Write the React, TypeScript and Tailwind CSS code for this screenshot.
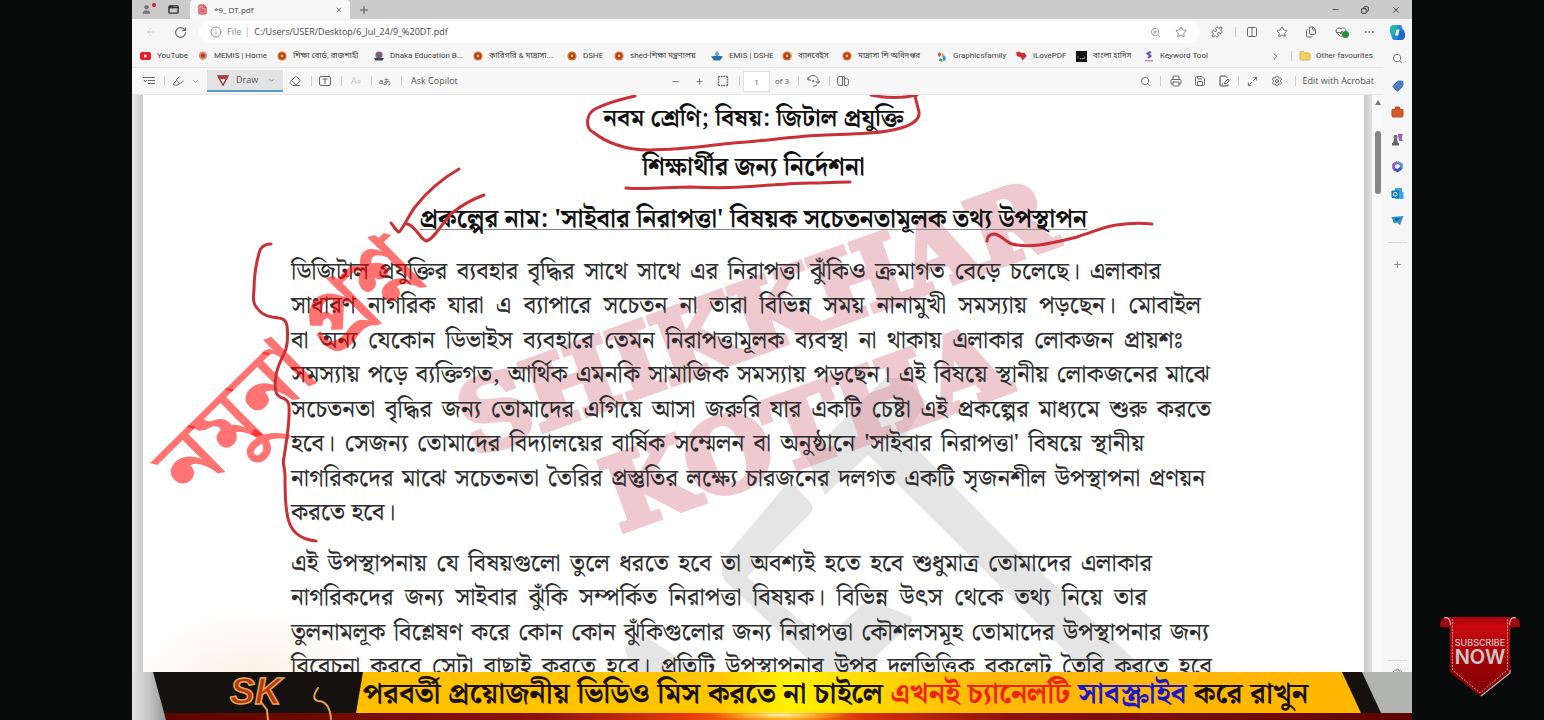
import React from "react";
import {
  ArrowLeft, RotateCw, Info, ZoomIn, Star, Puzzle, Columns2, HeartPulse, Ellipsis,
  Search, Tag, BriefcaseBusiness, Plus, Minus, X, Copy, ChevronRight, ChevronDown, Folder,
  Eraser, Printer, Save, FilePenLine, Maximize2, Settings, Highlighter,
  SquareDashed, Files, AppWindow, User, FileText,
} from "lucide-react";

const ui = "font-['Open_Sans','Noto_Sans_Bengali',sans-serif]";
const bn = "font-['Noto_Serif_Bengali','Noto_Sans_Bengali',serif]";

const Sep = ({ w }: { w: string }) => (
  <span className={`flex shrink-0 justify-center ${w}`}>
    <span className="h-[10px] w-px bg-[#d0d0d0]" />
  </span>
);

const Btn = ({ label, w, children }: { label: string; w: string; children: React.ReactNode }) => (
  <button type="button" aria-label={label} className={`flex h-full shrink-0 items-center justify-center ${w}`}>
    {children}
  </button>
);

const Seal = () => (
  <svg width="10" height="10" viewBox="0 0 10 10">
    <circle cx="5" cy="5" r="4.6" fill="#d9722f" />
    <circle cx="5" cy="5" r="3" fill="#a8341c" />
    <circle cx="5" cy="5" r="1.4" fill="#f6c65a" />
  </svg>
);

const YouTube = () => (
  <svg width="11" height="10" viewBox="0 0 11 10">
    <rect y="1" width="11" height="8" rx="2" fill="#e0202a" />
    <path d="M4.3 3.2 7.4 5 4.3 6.8Z" fill="#fff" />
  </svg>
);

const Crest = () => (
  <svg width="10" height="10" viewBox="0 0 10 10">
    <circle cx="5" cy="4" r="3.6" fill="#5a6f96" />
    <circle cx="5" cy="4" r="1.8" fill="#d33b3b" />
    <path d="M0 7h10L8.500 9.500h-7Z" fill="#33456b" />
  </svg>
);

const Home = () => (
  <svg width="10" height="10" viewBox="0 0 10 10">
    <circle cx="5" cy="4.600" r="4.200" fill="#e58a74" />
    <circle cx="5" cy="4.600" r="2.200" fill="#b13f2c" />
  </svg>
);

const Emis = () => (
  <svg width="12" height="10" viewBox="0 0 12 10">
    <path d="M6 0 8.500 3 6 5 3.500 3Z" fill="#58a6dc" />
    <path d="M0 5.500 6 4.500l6 1L9 9.500H3Z" fill="#2b6cb0" />
  </svg>
);

const Graphics = () => (
  <svg width="10" height="11" viewBox="0 0 10 11">
    <path d="M2 1 4.500 3 2.500 6 0.800 4Z" fill="#d84040" />
    <path d="M5 3.500 8 5 9 8.500 6.500 10.500Z" fill="#3f8fd6" />
    <path d="M2.500 7 6 8.500 5 10.800 2 10Z" fill="#48a858" />
    <path d="M4.500 1.500 7 3 5.500 5Z" fill="#e8b23c" />
  </svg>
);

const Love = () => (
  <svg width="11" height="10" viewBox="0 0 11 10">
    <path d="M0 1.500 3 .5 5.500 2 8.500 1.800 10.800 5 6.500 9.500 5 6.500 1 5Z" fill="#d32f2f" />
  </svg>
);

const Hadith = () => (
  <svg width="11" height="11" viewBox="0 0 11 11">
    <rect width="11" height="11" fill="#111" />
    <path d="M2 7.500V5M4 7.500h5M8.500 7V5.500" stroke="#999" strokeWidth=".8" fill="none" />
  </svg>
);

const Keyword = () => (
  <svg width="10" height="11" viewBox="0 0 10 11" fill="none">
    <path d="M7 1 3.500 2.500 6.500 5 4 7" stroke="#6b4bb8" strokeWidth="2" />
    <path d="M1 9.700h8" stroke="#d890cc" strokeWidth="1.600" />
  </svg>
);

const bookmarks: { t: string; w: string; i: React.ReactNode }[] = [
  { t: "YouTube", w: "w-[58px]", i: <YouTube /> },
  { t: "MEMIS | Home", w: "w-[79px]", i: <Home /> },
  { t: "শিক্ষা বোর্ড, রাজশাহী", w: "w-[97px]", i: <Seal /> },
  { t: "Dhaka Education B...", w: "w-[99px]", i: <Crest /> },
  { t: "কারিগরি & মাদ্রাসা...", w: "w-[94px]", i: <Seal /> },
  { t: "DSHE", w: "w-[47px]", i: <Seal /> },
  { t: "shed-শিক্ষা মন্ত্রণালয়", w: "w-[97px]", i: <Seal /> },
  { t: "EMIS | DSHE", w: "w-[71px]", i: <Emis /> },
  { t: "ব্যানবেইস", w: "w-[60px]", i: <Seal /> },
  { t: "মাদ্রাসা শি অধিদপ্তর", w: "w-[95px]", i: <Seal /> },
  { t: "Graphicsfamily", w: "w-[79px]", i: <Graphics /> },
  { t: "iLovePDF", w: "w-[60px]", i: <Love /> },
  { t: "বাংলা হাদিস", w: "w-[68px]", i: <Hadith /> },
  { t: "Keyword Tool", w: "w-[80px]", i: <Keyword /> },
];

const first: [string, string][] = [
  ["w-[870px]", "ডিজিটাল প্রযুক্তির ব্যবহার বৃদ্ধির সাথে সাথে এর নিরাপত্তা ঝুঁকিও ক্রমাগত বেড়ে চলেছে। এলাকার"],
  ["w-[910px]", "সাধারণ নাগরিক যারা এ ব্যাপারে সচেতন না তারা বিভিন্ন সময় নানামুখী সমস্যায় পড়ছেন। মোবাইল"],
  ["w-[892px]", "বা অন্য যেকোন ডিভাইস ব্যবহারে তেমন নিরাপত্তামূলক ব্যবস্থা না থাকায় এলাকার লোকজন প্রায়শঃ"],
  ["w-[919px]", "সমস্যায় পড়ে ব্যক্তিগত, আর্থিক এমনকি সামাজিক সমস্যায় পড়ছেন। এই বিষয়ে স্থানীয় লোকজনের মাঝে"],
  ["w-[920px]", "সচেতনতা বৃদ্ধির জন্য তোমাদের এগিয়ে আসা জরুরি যার একটি চেষ্টা এই প্রকল্পের মাধ্যমে শুরু করতে"],
  ["w-[853px]", "হবে। সেজন্য তোমাদের বিদ্যালয়ের বার্ষিক সম্মেলন বা অনুষ্ঠানে 'সাইবার নিরাপত্তা' বিষয়ে স্থানীয়"],
  ["w-[914px]", "নাগরিকদের মাঝে সচেতনতা তৈরির প্রস্তুতির লক্ষ্যে চারজনের দলগত একটি সৃজনশীল উপস্থাপনা প্রণয়ন"],
  ["w-[102px]", "করতে হবে।"],
];

const second: [string, string][] = [
  ["w-[861px]", "এই উপস্থাপনায় যে বিষয়গুলো তুলে ধরতে হবে তা অবশ্যই হতে হবে শুধুমাত্র তোমাদের এলাকার"],
  ["w-[856px]", "নাগরিকদের জন্য সাইবার ঝুঁকি সম্পর্কিত নিরাপত্তা বিষয়ক। বিভিন্ন উৎস থেকে তথ্য নিয়ে তার"],
  ["w-[918px]", "তুলনামলূক বিশ্লেষণ করে কোন কোন ঝুঁকিগুলোর জন্য নিরাপত্তা কৌশলসমূহ তোমাদের উপস্থাপনার জন্য"],
  ["w-[921px]", "বিবেচনা করবে সেটা বাছাই করতে হবে। প্রতিটি উপস্থাপনার উপর দলভিত্তিক বুকলেট তৈরি করতে হবে"],
];

const Para = ({ lines, h }: { lines: [string, string][]; h: string }) => (
  <p className={`flex flex-col justify-between text-[24px] font-medium leading-[34px] text-[#2e2e2e] ${h}`}>
    {lines.map(([w, t]) => (
      <span key={t} className={`block h-[34px] whitespace-nowrap text-justify [text-align-last:justify] ${w}`}>{t}</span>
    ))}
  </p>
);

const Watermark = () => (
  <svg className="absolute left-0 top-0 h-[577px] w-[1251px]" viewBox="132 95 1251 577" aria-hidden="true">
    <defs>
      <radialGradient id="warm">
        <stop offset="0" stopColor="#f6d2ac" stopOpacity=".35" />
        <stop offset="1" stopColor="#f6d2ac" stopOpacity="0" />
      </radialGradient>
    </defs>
    <ellipse cx="255" cy="680" rx="120" ry="70" fill="url(#warm)" />
    <g fill="#e5e5e5">
      <path d="M806 457 825 495 868 455 964 550 1088 674H1150L1017 550 905 437 926 402 905 378H885Z" />
      <path d="M784 487Q790 483 796 487L811 503Q815 508 810 514L747 577 825 640 864 603Q870 598 877 603L910 616Q915 620 909 626L850 680H830L724 580Q719 570 725 557Z" />
      <path d="M625 649Q634 634 646 637L704 674H632Z" />
    </g>
    <g fill="#dc8a9b" opacity=".46" stroke="#dc8a9b" strokeWidth="6" strokeLinejoin="miter" fontWeight="bold" fontFamily="'DejaVu Serif', serif">
      <text transform="translate(474 456) rotate(-19.900)" fontSize="97">SHIKKHAR</text>
      <text transform="translate(620 532) rotate(-19.900)" fontSize="100">KOTHA</text>
    </g>
  </svg>
);

const Ink = () => (
  <svg className="pointer-events-none absolute left-0 top-0 h-[577px] w-[1251px]" viewBox="132 95 1251 577" aria-hidden="true">
    <text transform="translate(192 501) rotate(-44.500)" fontSize="91" fontWeight="700" fill="#ff0000" fillOpacity=".55" fontFamily="'Noto Serif Bengali', serif">নমুনা প্রশ্ন</text>
    <g fill="none" stroke="#c93038" strokeWidth="3" strokeLinecap="round" strokeLinejoin="round">
      <path d="M635 96C617 100 605 104 595 109C586 114 585 128 593 132C605 142 625 150 649 150C680 150 705 146 733 143C765 141 795 136 825 135C858 134 885 133 901 128C914 124 920 119 919 112L915 96" />
      <path d="M871 95Q894 100 917 95" />
      <path d="M626 188C645 190 670 187 691 187C710 188 728 188 741 187C765 186 790 183 810 183C825 183 838 182 850 182" />
      <path d="M987 241C987 236 990 234 995 234C1002 236 1006 242 1012 244C1020 246 1031 246 1039 245C1054 243 1064 240 1077 237C1093 232 1106 226 1116 225C1130 223 1142 223 1152 224" />
      <path d="M391 223C394 226 396 231 399 232C402 230 409 215 415 207C430 188 445 177 459 169" />
      <path d="M407 224C415 225 420 239 426 241C434 240 445 219 452 213C462 205 473 199 484 195" />
      <path d="M271 244C266 244 262 246 260 250C256 263 254 280 254 290C253 299 253 304 257 308C261 314 266 316 272 317C280 318 286 318 287 326C288 334 288 341 286 349C282 359 277 366 276 376C274 388 276 395 280 397C286 399 289 401 289 407C290 420 286 445 284 457C282 464 285 468 285 475C285 490 285 503 287 513C289 531 299 539 316 541" />
    </g>
  </svg>
);

const Copilot = () => (
  <svg width="17" height="17" viewBox="0 0 17 17">
    <path d="M5 1h6c2 0 2 2 2.500 4L16 10c.5 3-1 6-4 6H6c-2.500 0-3-2-3.500-4L1 7C.5 4 2 1 5 1Z" fill="#1c88d8" />
    <path d="M5 1h5C7 3 7 8 5 11H2L1 7C.5 4 2 1 5 1Z" fill="#27b6a8" />
    <path d="M11 7l4-1 1 4c.5 3-1 6-4 6H7c3-2 3-6 4-9Z" fill="#2461c9" />
    <path d="M7.500 5.500h3L9 11.500H6Z" fill="#eaf7ff" />
  </svg>
);

const SideBtn = ({ label, children }: { label: string; children: React.ReactNode }) => (
  <button type="button" aria-label={label} className="flex h-[27px] items-center justify-center">{children}</button>
);

const Sidebar = () => (
  <aside className="flex w-[29px] shrink-0 flex-col bg-[#f6f6f6]">
    <SideBtn label="Search"><Search size={11} color="#6d6480" /></SideBtn>
    <SideBtn label="Shopping"><Tag size={12} className="scale-x-[-1]" fill="#4f7cc9" color="#4f7cc9" /></SideBtn>
    <SideBtn label="Tools"><BriefcaseBusiness size={13} fill="#cf5a2a" color="#b84a20" /></SideBtn>
    <SideBtn label="Games">
      <svg width="13" height="13" viewBox="0 0 13 13">
        <path d="M7 1h5l-1 2v3l1 2H8Z" fill="#9062c8" />
        <circle cx="4.500" cy="4" r="2.200" fill="#777" />
        <path d="M3 6h3l1 4h1v2.500H1V10h1Z" fill="#666" />
      </svg>
    </SideBtn>
    <SideBtn label="Microsoft 365">
      <svg width="13" height="13" viewBox="0 0 13 13" fill="none" strokeWidth="3">
        <path d="M6.500 2.200 10.300 4.500V8.700" stroke="#5b8ee0" />
        <path d="M10.300 8 6.500 10.800 2.700 8.700" stroke="#3e55c4" />
        <path d="M2.700 9V4.500L6.500 2.200" stroke="#8a62cf" />
      </svg>
    </SideBtn>
    <SideBtn label="Outlook">
      <svg width="13" height="13" viewBox="0 0 13 13">
        <path d="M4 1h7v4h1.500v7H4Z" fill="#38a5e0" />
        <rect x=".5" y="3.500" width="7.500" height="7.500" rx="1" fill="#1672b8" />
        <circle cx="4.200" cy="7.200" r="1.900" fill="none" stroke="#fff" />
      </svg>
    </SideBtn>
    <SideBtn label="Drop">
      <svg width="13" height="11" viewBox="0 0 13 11">
        <path d="M.5 2 12.500 1 9 10 6 7.500 3 8.500Z" fill="#2a93cf" />
        <path d="M3 3.500 9 3 5.500 6.500Z" fill="#17608f" />
      </svg>
    </SideBtn>
    <span className="mx-[5px] mt-2 h-px bg-[#d8d8d8]" />
    <button type="button" aria-label="Add" className="flex h-[43px] items-center justify-center"><Plus size={11} color="#8b8b8b" /></button>
    <span className="mx-[5px] mt-auto h-px bg-[#d8d8d8]" />
    <button type="button" aria-label="Settings" className="flex h-[11px] shrink-0 justify-center overflow-hidden pt-[7px]"><Settings size={11} className="shrink-0" color="#777" /></button>
  </aside>
);

const Banner = () => (
  <footer className="relative flex h-12 shrink-0 overflow-hidden bg-[#15110e]">
    <svg className="absolute inset-0 h-full w-full" viewBox="0 0 1280 48" preserveAspectRatio="none" aria-hidden="true">
      <defs>
        <linearGradient id="gold"><stop offset="0" stopColor="#ffbf00" /><stop offset=".36" stopColor="#ffc600" /><stop offset=".43" stopColor="#fff200" /><stop offset=".5" stopColor="#ffdc00" /><stop offset=".62" stopColor="#ffb80a" /><stop offset="1" stopColor="#ffb700" /></linearGradient>
        <linearGradient id="blaze"><stop offset="0" stopColor="#5c0500" /><stop offset=".3" stopColor="#8a1200" /><stop offset=".42" stopColor="#e63a08" /><stop offset=".5" stopColor="#ff9a1c" /><stop offset=".56" stopColor="#d92f05" /><stop offset=".68" stopColor="#8a1200" /><stop offset="1" stopColor="#5c0500" /></linearGradient>
        <linearGradient id="steel"><stop offset="0" stopColor="#e2e2e2" /><stop offset=".5" stopColor="#c4c5c4" /><stop offset="1" stopColor="#959795" /></linearGradient>
        <radialGradient id="spark"><stop offset="0" stopColor="#fff6b0" /><stop offset="1" stopColor="#ffd000" stopOpacity="0" /></radialGradient>
      </defs>
      <path d="M0 0H21L34 48H0Z" fill="url(#steel)" />
      <path d="M231 0H1210L1229 41H224Z" fill="url(#gold)" />
      <path d="M1230 0H1280V41H1249Z" fill="#b1b4b0" />
      <path d="M33 41H1280V48H35Z" fill="url(#blaze)" />
      <ellipse cx="648" cy="43" rx="70" ry="6" fill="url(#spark)" />
      <text x="98" y="32" fontSize="37" fontWeight="bold" fontStyle="italic" fontFamily="'Liberation Sans', sans-serif" fill="#b8360f" stroke="#e3a659" strokeWidth="1.500">SK</text>
      <path d="M129 30l6 8 1 10M186 16c-5 7-5 12 0 13 8 0 12 6 13 18" stroke="#e8a04e" strokeWidth="2" fill="none" strokeLinecap="round" />
    </svg>
    <p className={`relative flex-1 whitespace-nowrap pl-[231px] text-[29px] font-bold leading-[46px] text-[#1a1205] ${bn}`}>
      পরবর্তী প্রয়োজনীয় ভিডিও মিস করতে না চাইলে <span className="text-[#ee2410]">এখনই চ্যানেলটি</span> <span className="text-[#1d17c8]">সাবস্ক্রাইব</span> করে রাখুন
    </p>
  </footer>
);

const Ribbon = () => (
  <a href="#subscribe" aria-label="Subscribe now">
    <svg width="80" height="82" viewBox="0 0 80 82">
      <defs>
        <linearGradient id="red" x1="0" y1="0" x2="0" y2="1"><stop offset="0" stopColor="#a80509" /><stop offset=".12" stopColor="#c9090f" /><stop offset=".55" stopColor="#a00408" /><stop offset="1" stopColor="#7c0306" /></linearGradient>
      </defs>
      <path d="M0 11Q0 1 7 1L12 11Z" fill="#a3060a" />
      <path d="M80 11Q80 1 73 1L68 11Z" fill="#a3060a" />
      <path d="M7 1H73Q70 2 70 8V56L40 80 10 56V8Q10 2 7 1Z" fill="url(#red)" />
      <path d="M4 2Q10 0 10.500 9M76 2Q70 0 69.500 9M70 54V57L41 80" fill="none" stroke="#c9b6b6" strokeWidth="1.200" />
      <path d="M12.500 3V54L40 77 67.500 54V3" fill="none" stroke="#dba9a9" strokeWidth=".9" strokeDasharray="2 1.300" />
      <text x="40" y="30" textAnchor="middle" fontSize="9" fill="#d0c4c4" fontWeight="500" fontFamily="Inter, sans-serif">SUBSCRIBE</text>
      <text x="40" y="48" textAnchor="middle" fontSize="20" fill="#cdc6c6" fontWeight="600" fontFamily="Inter, sans-serif">NOW</text>
    </svg>
  </a>
);

const c = "#6a6a6a";

export default function App() {
  return (
    <div className={`flex h-screen overflow-hidden bg-[#090b0a] ${ui}`}>
      <div className="w-[132px] shrink-0" />
      <div className="flex min-w-0 flex-1 flex-col bg-[#f6f6f6]">
        <header className="shrink-0 text-[#666]">
          <div className="flex h-[19px] items-center bg-[#cbcbcb]">
            <Btn label="Profile" w="w-[29px]">
              <span className="relative">
                <User size={11} fill="#777" color="#777" />
                <span className="absolute -right-1 -top-px size-1 rounded-full bg-[#cc2233]" />
              </span>
            </Btn>
            <Btn label="Tab actions" w="w-[24px]"><AppWindow size={11} color="#333" strokeWidth={3} /></Btn>
            <div className="ml-[5px] flex h-full w-[160px] items-center rounded-t-[4px] bg-[#f7f7f7] pl-[7px] pr-[5px]">
              <FileText size={11} color="#c9303c" fill="#eea0a5" />
              <span className="ml-[6px] flex-1 text-[8px] text-[#444]">*9_ DT.pdf</span>
              <Btn label="Close tab" w="w-3"><X size={8} color="#444" /></Btn>
            </div>
            <Btn label="New tab" w="w-7"><Plus size={12} color="#555" /></Btn>
            <div className="ml-auto flex h-full pr-px">
              <Btn label="Minimize" w="w-[30px]"><Minus size={9} color="#333" /></Btn>
              <Btn label="Restore" w="w-[30px]"><Copy size={8} color="#333" strokeWidth={3} className="-scale-x-100" /></Btn>
              <Btn label="Close" w="w-[31px]"><X size={10} color="#333" /></Btn>
            </div>
          </div>

          <div className="flex h-[26px] items-center">
            <Btn label="Back" w="w-[38px]"><ArrowLeft size={12} color="#d4d4d4" /></Btn>
            <Btn label="Reload" w="w-5"><RotateCw size={13} color="#666" /></Btn>
            <div className="ml-[9px] flex h-[22px] flex-1 items-center rounded-full bg-white pl-[11px] pr-1">
              <Info size={12} color="#909090" />
              <span className="ml-[5px] text-[9px] text-[#888]">File</span>
              <Sep w="w-[13px]" />
              <input aria-label="Address" defaultValue="C:/Users/USER/Desktop/6_Jul_24/9_%20DT.pdf" className="min-w-0 flex-1 bg-transparent text-[9px] text-[#444] outline-none" />
              <Btn label="Zoom" w="w-6"><ZoomIn size={11} color="#999" /></Btn>
              <Btn label="Add favourite" w="w-7"><Star size={12} color="#888" /></Btn>
            </div>
            <Btn label="Extensions" w="w-[35px]"><Puzzle size={12} color={c} /></Btn>
            <Sep w="w-[3px]" />
            <Btn label="Split screen" w="w-[30px]"><Columns2 size={12} color={c} /></Btn>
            <Btn label="Favourites" w="w-[29px]"><Star size={12} color={c} /></Btn>
            <Btn label="Collections" w="w-[30px]"><Files size={12} color={c} /></Btn>
            <span className="relative flex">
              <Btn label="Browser essentials" w="w-[29px]"><HeartPulse size={12} color={c} /></Btn>
              <span className="absolute bottom-0 right-[6px] size-[7px] rounded-full bg-[#2e8b3a]" />
            </span>
            <Btn label="More" w="w-[28px]"><Ellipsis size={12} color={c} /></Btn>
            <Btn label="Copilot" w="w-[29px]"><Copilot /></Btn>
          </div>
        </header>

        <div className="flex min-h-0 flex-1">
          <div className="flex min-w-0 flex-1 flex-col">
            <nav aria-label="Favourites" className="flex h-[22px] shrink-0 items-center whitespace-nowrap pl-2 font-[Roboto,'Noto_Sans_Bengali',sans-serif] text-[8px] text-[#444]">
              {bookmarks.map((b) => (
                <a key={b.t} href="#bookmark" className={`flex shrink-0 items-center gap-[6px] ${b.w}`}>
                  <span className="shrink-0">{b.i}</span>
                  <span>{b.t}</span>
                </a>
              ))}
              <span className="ml-auto flex items-center pr-[10px]">
                <Btn label="More favourites" w="w-4"><ChevronRight size={11} /></Btn>
                <Sep w="w-4" />
                <a href="#other" className="flex items-center gap-[5px]"><Folder size={12} fill="#f5d06a" color="#e0b040" />Other favourites</a>
              </span>
            </nav>

            <div className="grid h-7 shrink-0 grid-cols-[1fr_auto_1fr] items-center whitespace-nowrap border-y border-[#e6e6e6] bg-[#f7f7f7] text-[9px] text-[#555]">
              <div className="flex h-full items-center pl-1">
                <Btn label="Contents" w="w-[26px]">
                  <svg width="12" height="10" viewBox="0 0 12 10" stroke={c} fill="none"><path d="M0 1.500H12M5 4.500H12M5 7.500H12M1 4l1.500 2L4 4" /></svg>
                </Btn>
                <Sep w="w-1" />
                <Btn label="Highlight" w="w-6"><Highlighter size={12} color={c} /></Btn>
                <Btn label="Highlight options" w="w-[10px]"><ChevronDown size={7} /></Btn>
                <button type="button" className="ml-[7px] flex h-[22px] w-[76px] items-center border-b-2 border-[#5a9cc8] bg-[#e3e3e3] pl-[10px] pr-2">
                  <svg width="12" height="11" viewBox="0 0 12 11"><path d="M1 1H11L7.500 7.500 6 10 4.500 7.500Z" fill="#f7e9e9" stroke="#8a2a30" strokeWidth="1.400" /><path d="M1 1H11L10 4H2Z" fill="#b93b42" /></svg>
                  <span className="ml-[7px] flex-1 text-left">Draw</span>
                  <ChevronDown size={7} />
                </button>
                <Btn label="Erase" w="w-6"><Eraser size={12} color={c} /></Btn>
                <Sep w="w-2" />
                <Btn label="Add text" w="w-5">
                  <svg width="12" height="10" viewBox="0 0 12 10" stroke={c} fill="none"><rect x=".5" y=".5" width="11" height="9" rx="1.500" /><path d="M3.500 3h5M6 3v5" /></svg>
                </Btn>
                <Sep w="w-3" />
                <Btn label="Read aloud" w="w-[18px]"><span className="text-[#c4c4c4]">A»</span></Btn>
                <Sep w="w-3" />
                <Btn label="Translate" w="w-4"><span className="text-[8px]">aあ</span></Btn>
                <Sep w="w-4" />
                <button type="button" className="px-[2px]">Ask Copilot</button>
              </div>
              <div className="flex h-full items-center">
                <Btn label="Zoom out" w="w-6"><Minus size={9} /></Btn>
                <Btn label="Zoom in" w="w-6"><Plus size={9} /></Btn>
                <Btn label="Fit page" w="w-6"><SquareDashed size={12} color={c} strokeWidth={3} /></Btn>
                <Sep w="w-2" />
                <input aria-label="Page" defaultValue="1" className="h-[21px] w-[27px] border border-[#dedede] bg-white text-center text-[8px]" />
                <span className="w-6 text-center text-[8px]">of 3</span>
                <Sep w="w-2" />
                <Btn label="Rotate" w="w-[22px]">
                  <svg width="13" height="12" viewBox="0 0 13 12" stroke={c} fill="none"><path d="M1 5A5 4.500 0 0 1 11 5V8M8.500 6 11 8.500 12.800 6M1 2V5H4M10 10A5 5 0 0 1 6 11" /><circle cx="6" cy="6" r="1" fill={c} stroke="none" /></svg>
                </Btn>
                <Sep w="w-[10px]" />
                <Btn label="Page view" w="w-[18px]">
                  <svg width="12" height="10" viewBox="0 0 12 10" stroke={c} fill="none"><path d="M5.500 .5H3Q.5 .5 .5 3v4Q.5 9.500 3 9.500h2.500ZM7.500 2.500h2q2 0 2 2v3q0 2-2 2h-2ZM5.500 .5h2v2" /></svg>
                </Btn>
              </div>
              <div className="flex h-full items-center justify-end pr-[9px]">
                <Btn label="Find" w="w-6"><Search size={11} color={c} /></Btn>
                <Sep w="w-[6px]" />
                <Btn label="Print" w="w-6"><Printer size={12} color={c} /></Btn>
                <Btn label="Save" w="w-6"><Save size={12} color={c} /></Btn>
                <Btn label="Save as" w="w-6"><FilePenLine size={12} color="#444" /></Btn>
                <Sep w="w-[5px]" />
                <Btn label="Full screen" w="w-6"><Maximize2 size={11} color={c} /></Btn>
                <Btn label="Settings" w="w-6"><Settings size={12} color={c} /></Btn>
                <Sep w="w-[14px]" />
                <button type="button">Edit with Acrobat</button>
              </div>
            </div>

            <main className="relative flex min-h-0 flex-1 overflow-hidden">
              <div className="w-[11px] shrink-0 bg-linear-to-r from-[#ececec] to-[#c9c9c9]" />
              <article className={`min-w-0 flex-1 bg-white pl-[148px] ${bn}`}>
                <Watermark />
                <div className="relative">
                  <div className="mr-[148px] whitespace-nowrap pt-[6px] text-center text-[#111]">
                    <h1 className="text-[24px] font-bold leading-9">নবম শ্রেণি; বিষয়: জিটাল প্রযুক্তি</h1>
                    <h2 className="mt-[13px] text-[25px] font-bold leading-9">শিক্ষার্থীর জন্য নির্দেশনা</h2>
                    <h3 className="mt-4 text-[25px] font-bold leading-9 underline decoration-[#8a8a8a] decoration-1 underline-offset-2">প্রকল্পের নাম: 'সাইবার নিরাপত্তা' বিষয়ক সচেতনতামূলক তথ্য উপস্থাপন</h3>
                  </div>
                  <div className="mt-[17px] flex flex-col gap-[17px]">
                    <Para lines={first} h="h-[275px]" />
                    <Para lines={second} h="h-[137px]" />
                  </div>
                </div>
              </article>
              <div className="w-2 shrink-0 bg-linear-to-r from-[#c9c9c9] to-[#e0e0e0]" />
              <div className="flex w-[11px] shrink-0 flex-col items-center bg-[#f8f8f8] pt-[5px]">
                <svg width="6" height="5" viewBox="0 0 6 5"><path d="M3 0 6 5H0Z" fill="#777" /></svg>
                <span className="mt-[26px] h-[63px] w-[6px] rounded-full bg-[#868686]" />
              </div>
              <Ink />
            </main>
          </div>
          <Sidebar />
        </div>
        <Banner />
      </div>
      <div className="flex w-[132px] shrink-0 items-end justify-center pb-[22px] pl-1"><Ribbon /></div>
    </div>
  );
}
